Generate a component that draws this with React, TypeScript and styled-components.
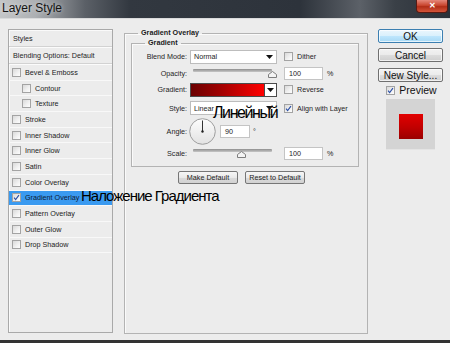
import React from 'react';
import styled, { createGlobalStyle } from 'styled-components';

const GlobalStyle = createGlobalStyle`
  html, body {
    margin: 0;
    padding: 0;
    background: #ececec;
    overflow: hidden;
  }
  body {
    font-family: "Liberation Sans", Arial, sans-serif;
    color: #1b1b1b;
  }
`;

const effects = [
  { name: 'Bevel & Emboss' },
  { name: 'Contour', indent: true },
  { name: 'Texture', indent: true },
  { name: 'Stroke' },
  { name: 'Inner Shadow' },
  { name: 'Inner Glow' },
  { name: 'Satin' },
  { name: 'Color Overlay' },
  { name: 'Gradient Overlay', checked: true, active: true },
  { name: 'Pattern Overlay' },
  { name: 'Outer Glow' },
  { name: 'Drop Shadow' },
];

const Check = ({ checked, size = 9 }: { checked?: boolean; size?: number }) => (
  <CheckBox $size={size}>
    {checked && (
      <svg width={size - 2} height={size - 2} viewBox="0 0 8 8">
        <path d="M1.2 4.2 L3 6.3 L6.8 1.2" fill="none" stroke="#2b4fa6" strokeWidth="1.3" />
      </svg>
    )}
  </CheckBox>
);

const Arrow = () => (
  <svg width="7" height="4" viewBox="0 0 7 4">
    <path d="M0 0 H7 L3.5 4 Z" fill="#111" />
  </svg>
);

const Slider = ({ value }: { value: number }) => (
  <SliderWrap>
    <Track />
    <Thumb style={{ left: `${value * 100}%` }}>
      <svg width="9" height="7" viewBox="0 0 9 7">
        <path d="M0.5 6.5 V3.5 L4.5 0.5 L8.5 3.5 V6.5 Z" fill="#f4f4f4" stroke="#7d7d7d" />
      </svg>
    </Thumb>
  </SliderWrap>
);

const Dial = () => (
  <svg width="27" height="27" viewBox="0 0 27 27">
    <defs>
      <linearGradient id="dialBg" x1="0" y1="0" x2="0" y2="1">
        <stop offset="0" stopColor="#fdfdfd" />
        <stop offset="1" stopColor="#e2e2e2" />
      </linearGradient>
    </defs>
    <circle cx="13.5" cy="13.5" r="12.8" fill="url(#dialBg)" stroke="#9d9d9d" />
    <line x1="13.5" y1="13.5" x2="13.5" y2="2.5" stroke="#333" strokeWidth="1" />
    <circle cx="13.5" cy="13.5" r="1.2" fill="#222" />
  </svg>
);

export default function App() {
  return (
    <>
      <GlobalStyle />
      <Window>
        <TitleBar>
          <Title>Layer Style</Title>
          <CloseButton>✕</CloseButton>
        </TitleBar>
        <Body>
          <Sidebar>
            <SideHeader>Styles</SideHeader>
            <SideHeader $strong>Blending Options: Default</SideHeader>
            {effects.map((e) => (
              <EffectRow key={e.name} $active={e.active} $indent={e.indent}>
                <Check checked={e.checked} />
                <span>{e.name}</span>
              </EffectRow>
            ))}
          </Sidebar>

          <Group>
            <Legend>Gradient Overlay</Legend>
            <InnerGroup>
              <InnerLegend>Gradient</InnerLegend>
              <Form>
                <Label $h={17}>Blend Mode:</Label>
                <Control>
                  <Select>
                    <span>Normal</span>
                    <Arrow />
                  </Select>
                </Control>
                <Side>
                  <Check />
                  <SideText>Dither</SideText>
                </Side>

                <Label $h={16}>Opacity:</Label>
                <Control>
                  <Slider value={1} />
                </Control>
                <Side>
                  <NumberBox>100</NumberBox>
                  <Unit>%</Unit>
                </Side>

                <Label $h={17}>Gradient:</Label>
                <Control>
                  <GradientPicker>
                    <Swatch />
                    <ArrowBox>
                      <Arrow />
                    </ArrowBox>
                  </GradientPicker>
                </Control>
                <Side>
                  <Check />
                  <SideText>Reverse</SideText>
                </Side>

                <Label $h={20}>Style:</Label>
                <Control>
                  <Select>
                    <span>Linear</span>
                    <Arrow />
                  </Select>
                </Control>
                <Side>
                  <Check checked />
                  <SideText>Align with Layer</SideText>
                </Side>

                <Label $h={27}>Angle:</Label>
                <Control>
                  <AngleRow>
                    <Dial />
                    <AngleBox>90</AngleBox>
                    <Unit>°</Unit>
                  </AngleRow>
                </Control>
                <Side />

                <Label $h={16}>Scale:</Label>
                <Control>
                  <Slider value={0.61} />
                </Control>
                <Side>
                  <NumberBox>100</NumberBox>
                  <Unit>%</Unit>
                </Side>
              </Form>
            </InnerGroup>
            <ButtonRow>
              <SmallButton>Make Default</SmallButton>
              <SmallButton>Reset to Default</SmallButton>
            </ButtonRow>
          </Group>

          <Actions>
            <DialogButton $primary>OK</DialogButton>
            <DialogButton>Cancel</DialogButton>
            <DialogButton>New Style...</DialogButton>
            <PreviewToggle>
              <Check checked size={9} />
              <span>Preview</span>
            </PreviewToggle>
            <PreviewBox>
              <PreviewSwatch />
            </PreviewBox>
          </Actions>
        </Body>
        <BottomEdge />

        <Caption $left={213} $top={105} $size={16} $spacing={-1.4}>Линейный</Caption>
        <Caption $left={81} $top={188} $size={15} $spacing={-1}>Наложение Градиента</Caption>
      </Window>
    </>
  );
}

const Window = styled.div`
  position: relative;
  width: 450px;
  height: 343px;
  display: flex;
  flex-direction: column;
  background: #ececec;
  overflow: hidden;
`;

const TitleBar = styled.div`
  height: 18px;
  flex-shrink: 0;
  display: flex;
  align-items: flex-start;
  justify-content: space-between;
  background: linear-gradient(
    90deg,
    #c4c6c8 0px,
    #adb0b3 35px,
    #5b6067 85px,
    #323840 130px,
    #2d333b 300px,
    #5c6168 360px,
    #3a4047 395px,
    #2b3139 450px
  );
  border-bottom: 1px solid #d9dadb;
`;

const Title = styled.div`
  font-family: "Liberation Sans", Arial, sans-serif;
  font-size: 12px;
  line-height: 17px;
  padding-left: 2px;
  color: #141414;
  text-shadow: 0 0 4px rgba(255, 255, 255, 0.6);
`;

const CloseButton = styled.div`
  width: 32px;
  height: 13px;
  margin-right: 2px;
  border: 1px solid #5a1a12;
  border-top: none;
  border-radius: 0 0 4px 4px;
  background: linear-gradient(180deg, #e5887a 0%, #c9462f 45%, #b12e17 55%, #d5553a 100%);
  color: #fff;
  font-size: 8px;
  font-weight: bold;
  line-height: 12px;
  text-align: center;
  box-sizing: border-box;
`;

const Body = styled.div`
  flex: 1;
  display: flex;
  align-items: flex-start;
  padding: 10px 0 0 8px;
`;

const Sidebar = styled.div`
  width: 105px;
  height: 304px;
  box-sizing: border-box;
  border: 1px solid #a9a9a9;
  box-shadow: inset 1px 1px 0 #fafafa;
  display: flex;
  flex-direction: column;
  flex-shrink: 0;
`;

const SideHeader = styled.div<{ $strong?: boolean }>`
  height: ${({ $strong }) => ($strong ? 15 : 16)}px;
  display: flex;
  align-items: center;
  padding-left: 4px;
  font-size: 7.2px;
  color: #1e1e1e;
  border-bottom: 1px solid #d2d2d2;
  box-shadow: 0 1px 0 #fbfbfb;
  margin-bottom: 1px;
`;

const EffectRow = styled.div<{ $active?: boolean; $indent?: boolean }>`
  height: 15.7px;
  box-sizing: border-box;
  display: flex;
  align-items: center;
  gap: 4px;
  padding-left: ${({ $indent }) => ($indent ? 13 : 3)}px;
  font-size: 7.2px;
  color: ${({ $active }) => ($active ? '#0e1a33' : '#222')};
  background: ${({ $active }) => ($active ? '#3a9af0' : 'transparent')};
  border-bottom: 1px solid #f8f8f8;
`;

const CheckBox = styled.span<{ $size: number }>`
  width: ${({ $size }) => $size}px;
  height: ${({ $size }) => $size}px;
  box-sizing: border-box;
  flex-shrink: 0;
  display: inline-flex;
  align-items: center;
  justify-content: center;
  border: 1px solid #a3a3a3;
  background: linear-gradient(135deg, #d9d9d9 0%, #f1f1f1 60%, #fdfdfd 100%);
`;

const Group = styled.fieldset`
  margin: -1px 0 0 11px;
  padding: 0 6px;
  width: 244px;
  height: 306px;
  box-sizing: border-box;
  border: 1px solid #b3b3b3;
  box-shadow: inset 1px 1px 0 #fafafa;
  min-width: 0;
  flex-shrink: 0;
`;

const Legend = styled.legend`
  margin-left: 7px;
  padding: 0 3px;
  font-size: 7.2px;
  line-height: 10px;
  font-weight: bold;
  color: #1b1b1b;
`;

const InnerGroup = styled.fieldset`
  margin: 0;
  padding: 0 0 5px 0;
  width: 228px;
  box-sizing: border-box;
  border: 1px solid #b3b3b3;
  box-shadow: inset 1px 1px 0 #fafafa;
  min-width: 0;
`;

const InnerLegend = styled(Legend)`
  margin-left: 13px;
`;

const Form = styled.div`
  display: grid;
  grid-template-columns: 58px 87px 1fr;
  align-items: center;
`;

const Label = styled.div<{ $h: number }>`
  height: ${({ $h }) => $h}px;
  display: flex;
  align-items: center;
  justify-content: flex-end;
  padding-right: 3px;
  font-size: 7.2px;
  color: #1e1e1e;
`;

const Control = styled.div`
  display: flex;
  align-items: center;
`;

const Side = styled.div`
  display: flex;
  align-items: center;
  gap: 4px;
  margin-left: 7px;
  font-size: 7.2px;
`;

const SideText = styled.span`
  color: #1e1e1e;
`;

const Select = styled.div`
  width: 87px;
  height: 14px;
  box-sizing: border-box;
  display: flex;
  align-items: center;
  justify-content: space-between;
  padding: 0 3px 0 3px;
  background: #fff;
  border: 1px solid #bdbdbd;
  font-size: 7.2px;
  color: #1e1e1e;
`;

const GradientPicker = styled.div`
  width: 87px;
  height: 14px;
  display: flex;
  box-sizing: border-box;
  border: 1px solid #4a4a4a;
  background: #fff;
`;

const Swatch = styled.div`
  flex: 1;
  background: linear-gradient(90deg, #6a0000 0%, #a00000 40%, #ff0000 100%);
  border-right: 1px solid #4a4a4a;
`;

const ArrowBox = styled.div`
  width: 11px;
  display: flex;
  align-items: center;
  justify-content: center;
`;

const SliderWrap = styled.div`
  position: relative;
  width: 79px;
  height: 12px;
  margin-left: 3px;
`;

const Track = styled.div`
  position: absolute;
  left: 0;
  right: 0;
  top: 2px;
  height: 3px;
  background: linear-gradient(180deg, #8e8e8e, #c6c6c6);
  border-radius: 1px;
`;

const Thumb = styled.div`
  position: absolute;
  top: 4px;
  width: 9px;
  height: 7px;
  margin-left: -4.5px;
  line-height: 0;
`;

const NumberBox = styled.div`
  width: 39px;
  height: 13px;
  box-sizing: border-box;
  padding-left: 4px;
  display: flex;
  align-items: center;
  background: #fff;
  border: 1px solid #c4c4c4;
  font-size: 7.2px;
`;

const Unit = styled.span`
  font-size: 7.2px;
  margin-left: 0;
`;

const AngleRow = styled.div`
  display: flex;
  align-items: center;
  gap: 3px;
  margin-left: -1px;
  svg {
    margin-top: -1px;
  }
`;

const AngleBox = styled(NumberBox)`
  width: 30px;
  margin-left: 1px;
`;

const ButtonRow = styled.div`
  display: flex;
  gap: 7px;
  margin: 4px 0 0 47px;
`;

const SmallButton = styled.div`
  width: 60px;
  height: 13px;
  box-sizing: border-box;
  display: flex;
  align-items: center;
  justify-content: center;
  border: 1px solid #767676;
  border-radius: 2px;
  background: linear-gradient(180deg, #f6f6f6 0%, #e9e9e9 50%, #dadada 51%, #d2d2d2 100%);
  font-size: 7.2px;
  color: #1b1b1b;
`;

const Actions = styled.div`
  width: 65px;
  margin-left: 10px;
  display: flex;
  flex-direction: column;
  align-items: center;
  flex-shrink: 0;
`;

const DialogButton = styled.div<{ $primary?: boolean }>`
  width: 65px;
  height: 14px;
  box-sizing: border-box;
  display: flex;
  align-items: center;
  justify-content: center;
  margin-bottom: 5px;
  border: 1px solid ${({ $primary }) => ($primary ? '#3c7fb1' : '#707070')};
  border-radius: 2px;
  background: ${({ $primary }) =>
    $primary
      ? 'linear-gradient(180deg, #eaf6fd 0%, #d9f0fc 50%, #bee6fd 51%, #a7d9f5 100%)'
      : 'linear-gradient(180deg, #f2f2f2 0%, #ebebeb 50%, #dddddd 51%, #cfcfcf 100%)'};
  box-shadow: inset 0 0 0 1px rgba(255, 255, 255, 0.7);
  font-size: 10px;
  color: #111;
  & + & + & {
    margin-top: 1px;
  }
`;

const PreviewToggle = styled.div`
  display: flex;
  align-items: center;
  gap: 4px;
  margin-top: -3px;
  padding-left: 2px;
  height: 12px;
  font-size: 10.5px;
  color: #111;
`;

const PreviewBox = styled.div`
  width: 49px;
  height: 50px;
  margin-top: 3px;
  background: #d4d4d4;
  border-bottom: 1px solid #e4e4e4;
  display: flex;
  align-items: center;
  justify-content: center;
`;

const PreviewSwatch = styled.div`
  width: 24px;
  height: 25px;
  margin-top: 5px;
  background: linear-gradient(180deg, #e20000 0%, #c00000 55%, #9a0000 100%);
`;

const BottomEdge = styled.div`
  height: 3px;
  background: #333;
  flex-shrink: 0;
`;

const Caption = styled.div<{ $left: number; $top: number; $size: number; $spacing: number }>`
  position: absolute;
  left: ${({ $left }) => $left}px;
  top: ${({ $top }) => $top}px;
  font-family: "Liberation Sans", Arial, sans-serif;
  font-size: ${({ $size }) => $size}px;
  line-height: 1;
  letter-spacing: ${({ $spacing }) => $spacing}px;
  color: #000;
  white-space: nowrap;
`;
